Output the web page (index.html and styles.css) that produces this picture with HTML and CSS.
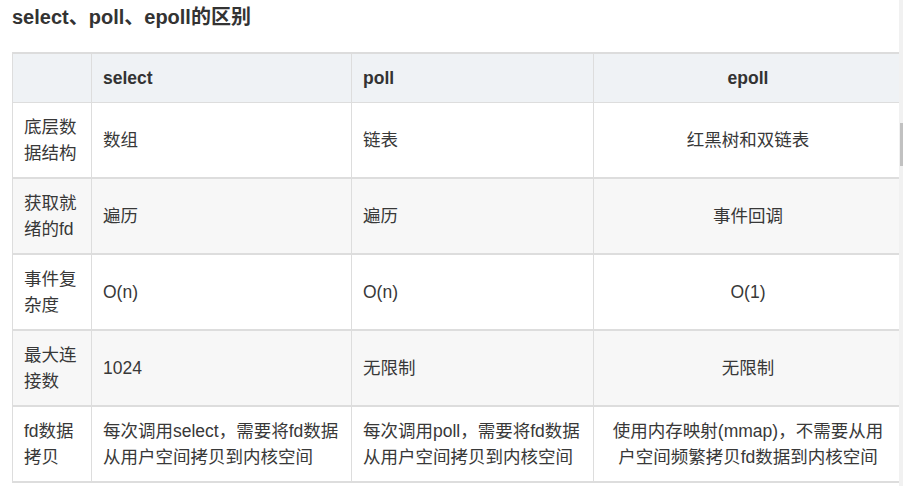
FILE: index.html
```html
<!DOCTYPE html>
<html lang="zh-CN">
<head>
<meta charset="utf-8">
<title>select、poll、epoll的区别</title>
<link rel="stylesheet" href="styles.css">
</head>
<body>
<div class="page">
  <div class="content">
    <h3 class="title">select、poll、epoll的区别</h3>
    <table class="cmp">
      <thead>
        <tr>
          <th class="c1"></th>
          <th class="c2">select</th>
          <th class="c3">poll</th>
          <th class="c4">epoll</th>
        </tr>
      </thead>
      <tbody>
        <tr>
          <td>底层数据结构</td>
          <td>数组</td>
          <td>链表</td>
          <td class="center">红黑树和双链表</td>
        </tr>
        <tr class="alt">
          <td>获取就绪的fd</td>
          <td>遍历</td>
          <td>遍历</td>
          <td class="center">事件回调</td>
        </tr>
        <tr>
          <td>事件复杂度</td>
          <td>O(n)</td>
          <td>O(n)</td>
          <td class="center">O(1)</td>
        </tr>
        <tr class="alt">
          <td>最大连接数</td>
          <td>1024</td>
          <td>无限制</td>
          <td class="center">无限制</td>
        </tr>
        <tr>
          <td>fd数据拷贝</td>
          <td>每次调用select，需要将fd数据从用户空间拷贝到内核空间</td>
          <td>每次调用poll，需要将fd数据从用户空间拷贝到内核空间</td>
          <td class="center">使用内存映射(mmap)，不需要从用户空间频繁拷贝fd数据到内核空间</td>
        </tr>
      </tbody>
    </table>
  </div>
  <div class="scrollbar"><div class="thumb"></div></div>
</div>
</body>
</html>
```

FILE: styles.css
```css
html, body {
  margin: 0;
  padding: 0;
  background: #ffffff;
}

body {
  font-family: "Liberation Sans", "Noto Sans CJK SC", sans-serif;
  color: #383838;
}

.page {
  display: flex;
  width: 903px;
  height: 486px;
  overflow: hidden;
}

.content {
  flex: 1;
  min-width: 0;
  overflow: hidden;
  padding-left: 12px;
}

.title {
  margin: 3px 0 0 0;
  font-size: 20px;
  line-height: 28px;
  font-weight: bold;
  color: #333333;
}

.cmp {
  margin-top: 21px;
  table-layout: fixed;
  width: 890px;
  border-collapse: separate;
  border-spacing: 0;
  border-top: 2px solid #dcdcdc;
  border-left: 1px solid #dddddd;
  font-size: 17.5px;
  line-height: 26px;
}

.cmp th,
.cmp td {
  box-sizing: border-box;
  padding: 11px 11px;
  border-right: 1px solid #dddddd;
  border-bottom: 2px solid #dddddd;
  text-align: left;
  vertical-align: middle;
}

.cmp th {
  background: #eff2f5;
  font-weight: bold;
  color: #333333;
  border-bottom-width: 1px;
}

.cmp .c1 { width: 79px; }
.cmp .c2 { width: 260px; }
.cmp .c3 { width: 242px; }
.cmp .c4 { width: 309px; text-align: center; }

.cmp td.center { text-align: center; }

.cmp tr.alt td { background: #f7f7f7; }

.scrollbar {
  flex: 0 0 4px;
  width: 4px;
  background: #f1f1f1;
}

.thumb {
  margin-top: 123px;
  margin-left: 1px;
  height: 43px;
  background: #c1c1c1;
}
```
